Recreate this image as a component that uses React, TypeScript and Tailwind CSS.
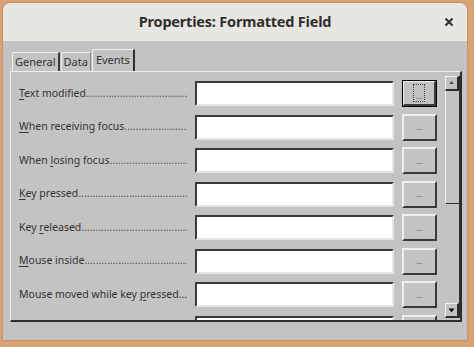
import React from "react";

type Row = { pre: string; key: string; post: string; dots: boolean };

const rows: Row[] = [
  { pre: "", key: "T", post: "ext modified", dots: true },
  { pre: "", key: "W", post: "hen receiving focus", dots: true },
  { pre: "When ", key: "l", post: "osing focus", dots: true },
  { pre: "", key: "K", post: "ey pressed", dots: true },
  { pre: "Key ", key: "r", post: "eleased", dots: true },
  { pre: "", key: "M", post: "ouse inside", dots: true },
  { pre: "Mouse moved while key ", key: "p", post: "ressed...", dots: false },
  { pre: "", key: "M", post: "ouse moved", dots: true },
];

const DOTS = ".".repeat(120);

const EventRow = ({ row, focused }: { row: Row; focused: boolean }) => (
  <div className="flex items-center h-[33.5px] shrink-0">
    <div className="w-[168px] flex items-center whitespace-nowrap overflow-hidden text-[10.5px] text-[#333]">
      <span>
        {row.pre}
        <span className="underline underline-offset-2">{row.key}</span>
        {row.post}
      </span>
      {row.dots && <span className="flex-1 min-w-0 overflow-hidden text-[#555]">{DOTS}</span>}
    </div>
    <div className="ml-[8px] w-[199px] h-[25px] shrink-0 bg-white border-t-2 border-l-2 border-t-[#3a3a3a] border-l-[#3a3a3a] border-b-2 border-r-2 border-b-[#e4e4e4] border-r-[#e4e4e4]" />
    {focused ? (
      <div className="ml-[8px] w-[35px] h-[27px] shrink-0 border border-black">
        <div className="w-full h-full flex items-center justify-center bg-[#c3c3c3] border-t border-l border-t-[#efefef] border-l-[#efefef] border-b-2 border-r-2 border-b-[#3a3a3a] border-r-[#3a3a3a]">
          <span className="h-[18px] px-[2px] flex items-end border border-dotted border-[#444] text-[8px] leading-[11px] text-[#555]">
            ...
          </span>
        </div>
      </div>
    ) : (
      <div className="ml-[8px] w-[35px] h-[27px] shrink-0 flex items-center justify-center bg-[#c3c3c3] border-t-2 border-l-2 border-t-[#efefef] border-l-[#efefef] border-b-2 border-r-2 border-b-[#3a3a3a] border-r-[#3a3a3a] text-[8px] text-[#555]">
        ...
      </div>
    )}
  </div>
);

const ScrollButton = ({ up }: { up: boolean }) => (
  <div className="h-[15px] w-full shrink-0 flex justify-center bg-[#c3c3c3] border-t border-l border-t-[#f2f2f2] border-l-[#f2f2f2] border-b-2 border-r-2 border-b-[#2e2e2e] border-r-[#2e2e2e]">
    {up ? (
      <svg width="7" height="7" viewBox="0 0 7 7" className="mt-[2px]">
        <path d="M1 5 L3.5 2 L6 5 Z" fill="#555" />
      </svg>
    ) : (
      <svg width="7" height="7" viewBox="0 0 7 7" className="mt-[3px]">
        <path d="M0.5 1.5 L6.5 1.5 L3.5 5.5 Z" fill="#111" />
      </svg>
    )}
  </div>
);

export default function App() {
  return (
    <div
      className="w-[474px] h-[347px] bg-[#d9a374] pt-[3px] pl-[3px] overflow-hidden"
      style={{ fontFamily: '"Noto Sans", "Open Sans", sans-serif' }}
    >
      <div className="w-[464px] h-[337px] rounded-t-[7px] overflow-hidden flex flex-col bg-[#c3c3c3] shadow-[0_0_2px_rgba(0,0,0,0.35)]">
        {/* title bar */}
        <div className="h-[39px] shrink-0 bg-[#e8e6e3] grid grid-cols-[1fr_auto_1fr] items-center border-b border-[#c9c7c4]">
          <div />
          <div className="text-[14.5px] font-bold text-[#2e2e2e] tracking-[-0.2px]">Properties: Formatted Field</div>
          <div className="flex justify-end pr-[13px]">
            <svg width="10" height="10" viewBox="0 0 10 10">
              <path d="M1.5 1.5 L8.5 8.5 M8.5 1.5 L1.5 8.5" stroke="#2e2e2e" strokeWidth="2" />
            </svg>
          </div>
        </div>

        {/* body */}
        <div className="flex-1 min-h-0 flex flex-col pt-[7px] pl-[7px] pr-[5px] pb-[18px]">
          {/* tabs */}
          <div className="h-[22px] shrink-0 flex items-end pl-[2px] text-[11px] text-[#333]">
            <div className="h-[19px] px-[2px] flex items-center border-t border-l border-t-[#eeeeee] border-l-[#eeeeee] border-r-2 border-r-[#3a3a3a] rounded-tl-[2px]">
              General
            </div>
            <div className="ml-[1px] h-[19px] px-[2px] flex items-center border-t border-l border-t-[#eeeeee] border-l-[#eeeeee] border-r border-r-[#8a8a8a] rounded-tl-[2px]">
              Data
            </div>
            <div className="ml-[1px] h-[22px] px-[3px] flex items-center border-t border-l border-t-[#f2f2f2] border-l-[#f2f2f2] border-r-2 border-r-[#2e2e2e] rounded-tl-[2px]">
              Events
            </div>
          </div>

          {/* panel */}
          <div className="flex-1 min-h-0 flex border-t border-l border-t-[#f0f0f0] border-l-[#f0f0f0] border-b-2 border-r-2 border-b-[#2e2e2e] border-r-[#2e2e2e]">
            <div className="flex-1 min-h-0 flex flex-col pl-[8px] pt-[5px] overflow-hidden">
              {rows.map((r, i) => (
                <EventRow key={i} row={r} focused={i === 0} />
              ))}
            </div>
            <div className="w-[15px] shrink-0 ml-[8px] mt-[4px] mb-[2px] flex flex-col border-r border-[#2e2e2e]">
              <ScrollButton up />
              <div className="h-[113px] shrink-0 border-l border-l-[#f2f2f2] border-b border-b-[#2e2e2e] bg-[#c3c3c3]" />
              <div className="flex-1" />
              <ScrollButton up={false} />
            </div>
          </div>
        </div>
      </div>
    </div>
  );
}
